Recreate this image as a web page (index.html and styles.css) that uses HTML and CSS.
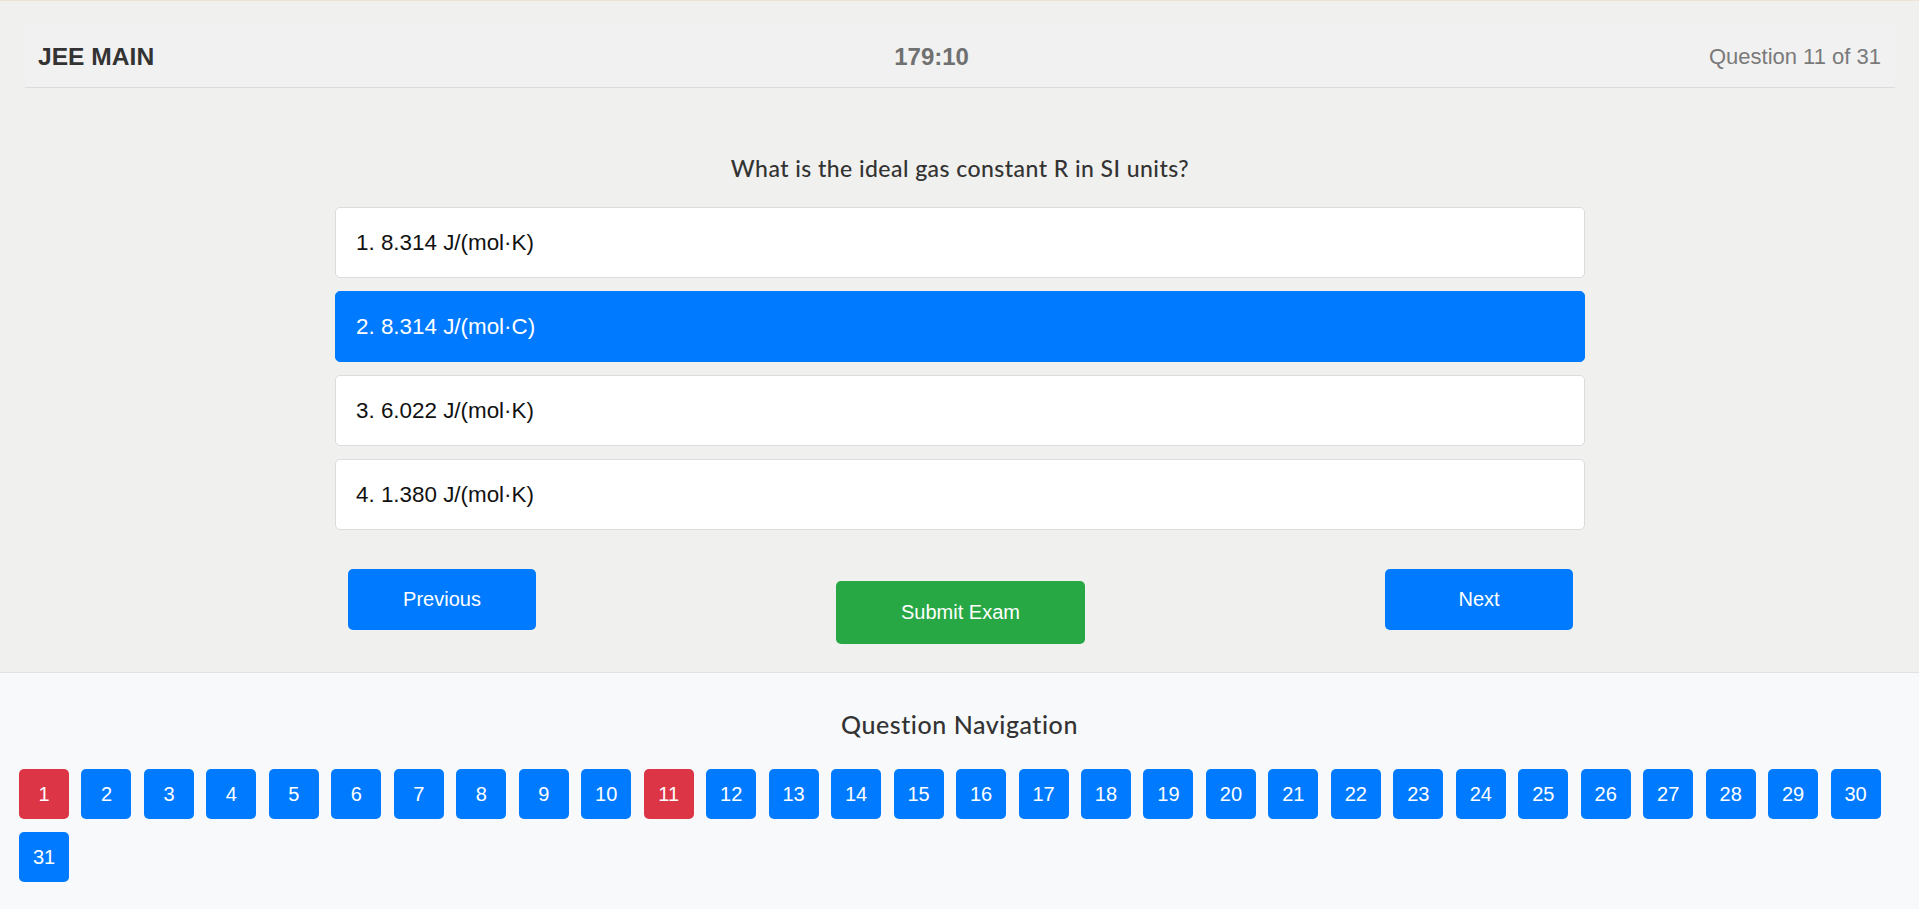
FILE: index.html
```html
<!DOCTYPE html>
<html lang="en">
<head>
<meta charset="utf-8">
<title>JEE MAIN Exam</title>
<link rel="stylesheet" href="styles.css">
</head>
<body>
<div class="exam">
  <header class="exam-header">
    <div class="exam-title">JEE MAIN</div>
    <div class="exam-timer">179:10</div>
    <div class="exam-progress">Question 11 of 31</div>
  </header>
  <section class="question">
    <h2 class="question-text">What is the ideal gas constant R in SI units?</h2>
    <div class="options">
      <div class="option">1. 8.314 J/(mol·K)</div>
      <div class="option selected">2. 8.314 J/(mol·C)</div>
      <div class="option">3. 6.022 J/(mol·K)</div>
      <div class="option">4. 1.380 J/(mol·K)</div>
    </div>
    <div class="controls">
      <button class="btn btn-blue">Previous</button>
      <button class="btn btn-green">Submit Exam</button>
      <button class="btn btn-blue">Next</button>
    </div>
  </section>
</div>
<section class="navigation">
  <h3 class="nav-title">Question Navigation</h3>
  <div class="nav-grid">
    <button class="nav-btn red">1</button>
    <button class="nav-btn">2</button>
    <button class="nav-btn">3</button>
    <button class="nav-btn">4</button>
    <button class="nav-btn">5</button>
    <button class="nav-btn">6</button>
    <button class="nav-btn">7</button>
    <button class="nav-btn">8</button>
    <button class="nav-btn">9</button>
    <button class="nav-btn">10</button>
    <button class="nav-btn red">11</button>
    <button class="nav-btn">12</button>
    <button class="nav-btn">13</button>
    <button class="nav-btn">14</button>
    <button class="nav-btn">15</button>
    <button class="nav-btn">16</button>
    <button class="nav-btn">17</button>
    <button class="nav-btn">18</button>
    <button class="nav-btn">19</button>
    <button class="nav-btn">20</button>
    <button class="nav-btn">21</button>
    <button class="nav-btn">22</button>
    <button class="nav-btn">23</button>
    <button class="nav-btn">24</button>
    <button class="nav-btn">25</button>
    <button class="nav-btn">26</button>
    <button class="nav-btn">27</button>
    <button class="nav-btn">28</button>
    <button class="nav-btn">29</button>
    <button class="nav-btn">30</button>
    <button class="nav-btn">31</button>
  </div>
</section>
</body>
</html>
```

FILE: styles.css
```css
* { box-sizing: border-box; }

html, body {
  margin: 0;
  padding: 0;
}

body {
  background: #f0f0ee;
  border-top: 1px solid #ede3d2;
  font-family: "Liberation Sans", Arial, sans-serif;
  color: #333;
}

.exam {
  padding: 25px 24px 28px 25px;
}

.exam-header {
  display: flex;
  justify-content: space-between;
  align-items: center;
  height: 62px;
  padding: 0 14px 0 13px;
  background: #f1f1f1;
  border-bottom: 1px solid #dcdcdc;
}

.exam-title {
  font-size: 24.6px;
  font-weight: bold;
  color: #333;
}

.exam-timer {
  font-size: 24px;
  font-weight: bold;
  color: #707070;
}

.exam-progress {
  font-size: 22px;
  color: #7a7a7a;
}

.question {
  display: flex;
  flex-direction: column;
  align-items: center;
}

.question-text {
  margin: 66px 0 25px;
  font-family: Lato, "Open Sans", sans-serif;
  font-weight: 500;
  font-size: 23px;
  line-height: 28px;
  letter-spacing: 0.45px;
  color: #333;
}

.options {
  width: 1250px;
  display: flex;
  flex-direction: column;
  gap: 13px;
}

.option {
  background: #fff;
  border: 1px solid #dcdcdc;
  border-radius: 5px;
  padding: 22px 20px;
  font-size: 22.4px;
  line-height: 25px;
  color: #111;
}

.option.selected {
  background: #007bff;
  border-color: #007bff;
  color: #fff;
}

.controls {
  width: 1250px;
  margin-top: 39px;
  padding: 0 12px 0 13px;
  display: flex;
  justify-content: space-between;
  align-items: flex-start;
}

.btn {
  border: none;
  border-radius: 5px;
  font-family: "Liberation Sans", Arial, sans-serif;
  font-size: 20px;
  color: #fff;
  height: 61px;
  width: 188px;
  cursor: pointer;
}

.btn-blue { background: #007bff; }

.btn-green {
  background: #28a745;
  width: 249px;
  height: 63px;
  margin-top: 12px;
}

.navigation {
  background: #f8f9fa;
  border-top: 1px solid #e2e2e2;
  padding: 0 15px 40px;
  min-height: 240px;
}

.nav-title {
  margin: 0;
  padding: 35px 0 29px;
  text-align: center;
  font-family: Lato, "Open Sans", sans-serif;
  font-weight: 500;
  font-size: 25px;
  line-height: 32px;
  letter-spacing: 0.55px;
  color: #333;
}

.nav-grid {
  display: flex;
  flex-wrap: wrap;
  gap: 13px 12.48px;
  padding: 0 4px;
}

.nav-btn {
  width: 50px;
  height: 50px;
  border: none;
  border-radius: 5px;
  background: #007bff;
  color: #fff;
  font-family: "Liberation Sans", Arial, sans-serif;
  font-size: 20px;
  padding: 0;
}

.nav-btn.red { background: #dc3545; }
```
